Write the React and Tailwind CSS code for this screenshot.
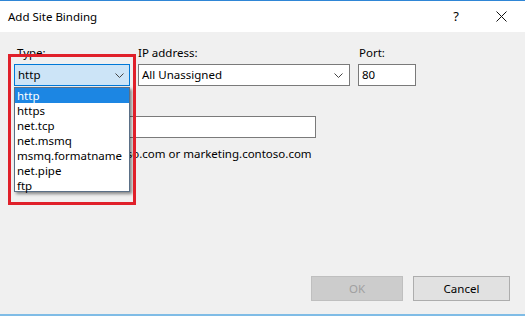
import React from 'react';

const font = { fontFamily: '"Noto Sans", "Open Sans", Arial, sans-serif' };

const typeOptions = ['http', 'https', 'net.tcp', 'net.msmq', 'msmq.formatname', 'net.pipe', 'ftp'];

const Chevron = () => (
  <svg width="9" height="5" viewBox="0 0 9 5" className="shrink-0">
    <polyline points="0.5,0.5 4.5,4.5 8.5,0.5" fill="none" stroke="#444" strokeWidth="1" />
  </svg>
);

const CloseIcon = () => (
  <svg width="11" height="11" viewBox="0 0 11 11">
    <line x1="0.5" y1="0.5" x2="10.5" y2="10.5" stroke="#111" strokeWidth="1" />
    <line x1="10.5" y1="0.5" x2="0.5" y2="10.5" stroke="#111" strokeWidth="1" />
  </svg>
);

export default function App() {
  return (
    <div
      className="relative w-[525px] h-[316px] flex flex-col bg-[#f0f0f0] text-[11.5px] text-black overflow-hidden"
      style={font}
    >
      {/* Title bar */}
      <div className="h-[32px] bg-white border-t border-[#2f86d6] flex items-center pl-[8px] pr-[18px] shrink-0">
        <span className="flex-1">Add Site Binding</span>
        <span className="mr-[37px] text-[13px]">?</span>
        <CloseIcon />
      </div>

      {/* Body */}
      <div className="flex-1 flex flex-col px-[14px] pt-[13px]">
        <div className="flex items-start">
          <div className="w-[116px] flex flex-col">
            <label className="leading-4 mb-[3px] ml-[3px]">Type:</label>
            <div className="h-[22px] border border-[#0078d7] bg-[#cce4f7] flex items-center pl-[3px] pr-[5px]">
              <span className="flex-1">http</span>
              <Chevron />
            </div>
          </div>
          <div className="w-[212px] ml-[8px] flex flex-col">
            <label className="leading-4 mb-[3px]">IP address:</label>
            <div className="h-[22px] border border-[#7a7a7a] bg-white flex items-center pl-[3px] pr-[6px]">
              <span className="flex-1">All Unassigned</span>
              <Chevron />
            </div>
          </div>
          <div className="w-[58px] ml-[8px] flex flex-col">
            <label className="leading-4 mb-[3px] ml-[1px]">Port:</label>
            <div className="h-[22px] border border-[#7a7a7a] bg-white flex items-center pl-[3px]">
              80
            </div>
          </div>
        </div>

        <label className="leading-4 mt-[11px] mb-[3px]">Host name:</label>
        <div className="w-[302px] h-[22px] border border-[#7a7a7a] bg-white" />
        <p className="leading-4 mt-[8px]">Example: www.contoso.com or marketing.contoso.com</p>

        <div className="flex-1" />

        {/* Buttons */}
        <div className="flex justify-end gap-[10px] pr-[1px] pb-[13px]">
          <button className="w-[92px] h-[25px] border border-[#bfbfbf] bg-[#cccccc] text-[#a0a0a0]">OK</button>
          <button className="w-[97px] h-[25px] border border-[#adadad] bg-[#e1e1e1]">Cancel</button>
        </div>
      </div>

      <div className="h-[2px] bg-[#7fbce6] shrink-0" />

      {/* Open dropdown list */}
      <div className="absolute left-[14px] top-[87px] w-[116px] h-[105px] bg-white border border-[#5a6f86] shadow-[2px_2px_3px_rgba(0,0,0,0.45)]">
        {typeOptions.map((opt, i) => (
          <div
            key={opt}
            className={
              i === 0
                ? 'h-[15px] leading-[15px] pl-[2px] bg-[#1c86e3] text-white'
                : 'h-[15px] leading-[15px] pl-[2px]'
            }
          >
            {opt}
          </div>
        ))}
      </div>

      {/* Red highlight box */}
      <div className="absolute left-[8px] top-[54px] w-[128px] h-[151px] border-[3px] border-[#e0202a] pointer-events-none" />
    </div>
  );
}
